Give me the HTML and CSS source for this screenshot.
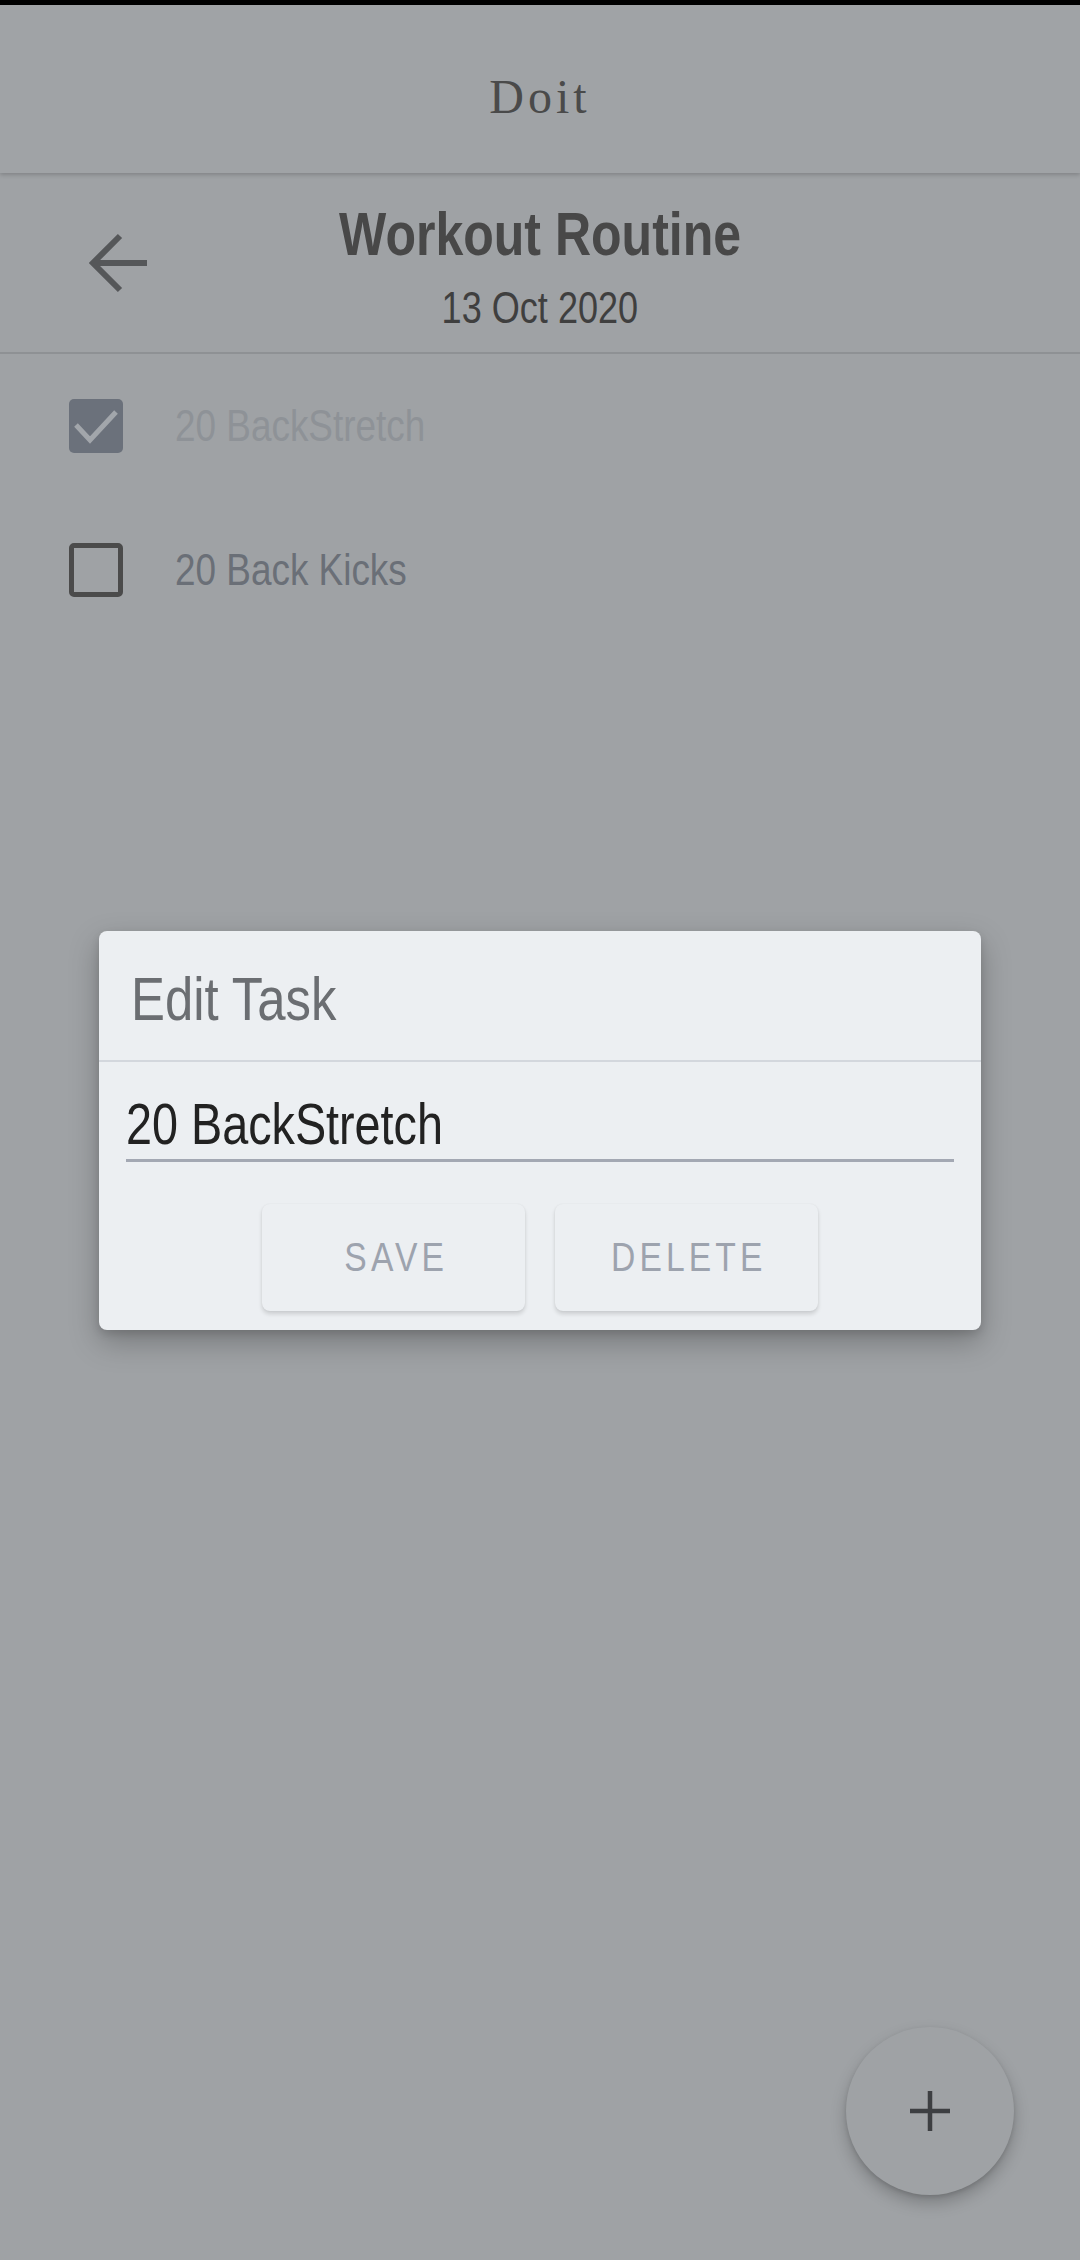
FILE: index.html
```html
<!DOCTYPE html>
<html>
<head>
<meta charset="utf-8">
<link rel="stylesheet" href="styles.css">
</head>
<body>
<div class="status"></div>
<header class="appbar"><span class="brand">Doit</span></header>
<section class="header">
  <div class="back">
    <svg width="60" height="60" viewBox="0 0 60 60"><path d="M60 30H6M33 3L6 30l27 27" fill="none" stroke="#555759" stroke-width="6"/></svg>
  </div>
  <div class="titles">
    <div class="title"><span class="nc">Workout Routine</span></div>
    <div class="date"><span class="nc">13 Oct 2020</span></div>
  </div>
  <div></div>
</section>
<ul class="list">
  <li class="row done">
    <span class="box checked"><svg width="54" height="54" viewBox="0 0 54 54"><path d="M7 26l14 15L47 13" fill="none" stroke="#a2a6ab" stroke-width="5"/></svg></span>
    <span class="label nl">20 BackStretch</span>
  </li>
  <li class="row">
    <span class="box"></span>
    <span class="label nl">20 Back Kicks</span>
  </li>
</ul>

<div class="overlay">
  <div class="dialog">
    <div class="dlg-title"><span class="nl">Edit Task</span></div>
    <div class="dlg-body">
      <div class="input"><span class="nl">20 BackStretch</span></div>
      <div class="actions">
        <button class="btn"><span class="nc">SAVE</span></button>
        <button class="btn"><span class="nc">DELETE</span></button>
      </div>
    </div>
  </div>
</div>

<button class="fab"><svg width="40" height="40" viewBox="0 0 40 40"><path d="M20 0v40M0 20h40" stroke="#3d3f42" stroke-width="4.5"/></svg></button>
</body>
</html>
```
FILE: styles.css
```css
* { box-sizing: border-box; }
html, body { margin: 0; padding: 0; }
body {
  width: 1080px;
  height: 2260px;
  overflow: hidden;
  position: relative;
  background: #9fa2a5;
  font-family: "Liberation Sans", Arial, sans-serif;
}
/* narrow rendering of the condensed UI face */
.nc, .nl { display: inline-block; transform: scaleX(0.82); white-space: nowrap; }
.nc { transform-origin: center; }
.nl { transform-origin: left center; }

.status { height: 5px; background: #000; }
.appbar {
  height: 168px;
  display: flex;
  align-items: center;
  justify-content: center;
  padding-top: 14px;
  background: #a0a3a6;
  box-shadow: 0 2px 4px rgba(0,0,0,0.18);
  position: relative;
  z-index: 1;
}
.brand {
  font-family: "Liberation Serif", serif;
  font-size: 48px;
  letter-spacing: 4px;
  color: #4a4a4a;
}
.header {
  height: 181px;
  border-bottom: 2px solid #8e9194;
  display: grid;
  grid-template-columns: 1fr auto 1fr;
  align-items: start;
}
.back { padding-left: 87px; padding-top: 60px; display: flex; }
.titles { text-align: center; padding-top: 25px; }
.title { font-size: 61px; font-weight: bold; color: #484848; line-height: 72px; }
.date { font-size: 44px; color: #3f3f3f; line-height: 56px; margin-top: 10px; }
.list { list-style: none; margin: 0; padding: 0 0 0 69px; }
.row { height: 144px; display: flex; align-items: center; gap: 52px; }
.box {
  width: 54px; height: 54px; border-radius: 5px;
  border: 5px solid #4b4b4b;
  flex: none;
  display: flex;
}
.box.checked { background: #6b717b; border: none; }
.label { font-size: 45px; line-height: 52px; color: #6a6f77; }
.done .label { color: #8e9297; }

.overlay {
  position: absolute;
  inset: 0;
  display: flex;
  align-items: center;
  justify-content: center;
}
.dialog {
  width: 882px;
  height: 399px;
  background: #eceff2;
  border-radius: 8px;
  box-shadow: 0 12px 30px rgba(0,0,0,0.25), 0 4px 8px rgba(0,0,0,0.12);
  display: flex;
  flex-direction: column;
}
.dlg-title {
  height: 131px;
  padding: 32px 0 0 32px;
  font-size: 62px;
  line-height: 72px;
  color: #6b6e72;
  border-bottom: 2px solid #d3d7dd;
}
.dlg-body { padding: 0 27px 19px; display: flex; flex-direction: column; flex: 1; }
.input {
  font-size: 57px;
  line-height: 64px;
  color: #222;
  padding: 30px 0 3px;
  border-bottom: 3px solid #a3a8b3;
}
.actions { margin-top: auto; display: flex; justify-content: center; gap: 30px; }
.btn {
  width: 263px;
  height: 107px;
  border: none;
  border-radius: 8px;
  background: #eceff2;
  box-shadow: 0 3px 4px rgba(0,0,0,0.14), 0 0 2px rgba(0,0,0,0.06);
  font-family: inherit;
  font-size: 41px;
  letter-spacing: 5px;
  color: #9da3ae;
  padding: 0 0 0 5px;
  display: flex;
  align-items: center;
  justify-content: center;
}
.fab {
  position: absolute;
  left: 846px;
  top: 2027px;
  width: 168px;
  height: 168px;
  border-radius: 50%;
  border: none;
  background: #9fa2a5;
  box-shadow: 0 8px 16px rgba(0,0,0,0.22), 0 2px 4px rgba(0,0,0,0.12);
  display: flex;
  align-items: center;
  justify-content: center;
  padding: 0;
}
```
